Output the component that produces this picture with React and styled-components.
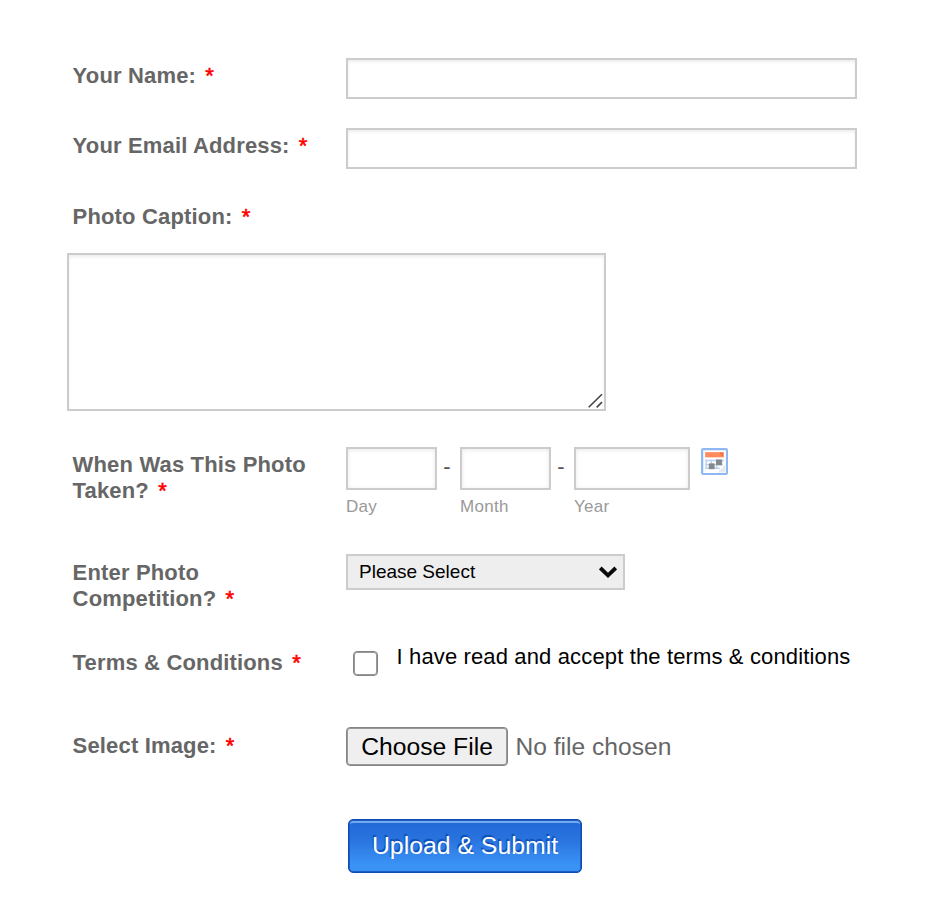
import React, { useState } from "react";
import styled, { createGlobalStyle } from "styled-components";

const App = () => {
  const [form, setForm] = useState({
    name: "",
    email: "",
    caption: "",
    day: "",
    month: "",
    year: "",
    terms: false,
  });

  const onChange = (e) => {
    const { name, type, checked, value } = e.target;
    setForm({ ...form, [name]: type === "checkbox" ? checked : value });
  };

  return (
    <>
      <GlobalStyle />
      <Form onSubmit={(e) => e.preventDefault()}>
        <Row $height={70}>
          <Label>
            Your Name: <Required>*</Required>
          </Label>
          <TextInput name="name" value={form.name} onChange={onChange} />
        </Row>

        <Row $height={71}>
          <Label>
            Your Email Address: <Required>*</Required>
          </Label>
          <TextInput name="email" value={form.email} onChange={onChange} />
        </Row>

        <Row $height={54}>
          <Label>
            Photo Caption: <Required>*</Required>
          </Label>
        </Row>

        <CaptionBox>
          <Caption name="caption" value={form.caption} onChange={onChange} />
          <Grip viewBox="0 0 15 15">
            <path d="M0.7 14.3L14 1.2M8.7 14.3L14 9.2" />
          </Grip>
        </CaptionBox>

        <Row $height={107}>
          <Label>
            When Was This Photo
            <br />
            Taken? <Required>*</Required>
          </Label>
          <DateGroup>
            <DatePart $width={91}>
              <DateInput name="day" value={form.day} onChange={onChange} />
              <SubLabel>Day</SubLabel>
            </DatePart>
            <Dash>-</Dash>
            <DatePart $width={91}>
              <DateInput name="month" value={form.month} onChange={onChange} />
              <SubLabel>Month</SubLabel>
            </DatePart>
            <Dash>-</Dash>
            <DatePart $width={116}>
              <DateInput name="year" value={form.year} onChange={onChange} />
              <SubLabel>Year</SubLabel>
            </DatePart>
            <CalendarIcon />
          </DateGroup>
        </Row>

        <Row $height={90}>
          <Label $top={6}>
            Enter Photo
            <br />
            Competition? <Required>*</Required>
          </Label>
          <Select type="button">
            Please Select
            <svg width="18" height="12" viewBox="0 0 18 12">
              <path d="M1.3 2L9 9.3L16.7 2" fill="none" stroke="#0a0a0a" strokeWidth="3.8" />
            </svg>
          </Select>
        </Row>

        <Row $height={83}>
          <Label $top={6}>
            Terms &amp; Conditions <Required>*</Required>
          </Label>
          <Terms>
            <Checkbox
              type="checkbox"
              name="terms"
              checked={form.terms}
              onChange={onChange}
            />
            <span>I have read and accept the terms &amp; conditions</span>
          </Terms>
        </Row>

        <Row $height={92}>
          <Label $top={6}>
            Select Image: <Required>*</Required>
          </Label>
          <FileField>
            <FileButton type="button">Choose File</FileButton>
            <FileName>No file chosen</FileName>
          </FileField>
        </Row>

        <Submit type="submit">Upload &amp; Submit</Submit>
      </Form>
    </>
  );
};

const CalendarIcon = () => (
  <Calendar viewBox="0 0 26 26">
    <rect x="1" y="1" width="24" height="24" rx="1" fill="#fff" stroke="#8fb8f0" strokeWidth="2" />
    <path d="M2.5 23.5V2.5H23.5" fill="none" stroke="#dfeafb" />
    <path d="M16 23.5L23.5 16V23.5Z" fill="#e3eaf3" />
    <path d="M5 11V20M10 11V20M15 11V20M20 11V17M4 12H22M4 16H21M4 19.5H18" stroke="#b9d0f3" strokeWidth="1.3" />
    <rect x="4" y="4" width="18" height="5" fill="#ff8a5c" />
    <path d="M19 4.5V6M21 4.5V5.5M20.5 6.5V8" stroke="#f0563a" strokeWidth="1.2" />
    <rect x="14.5" y="11" width="5.6" height="5.6" fill="#85898a" />
    <rect x="7.5" y="14.8" width="5.6" height="5.6" fill="#85898a" />
  </Calendar>
);

export default App;

const GlobalStyle = createGlobalStyle`
  * {
    box-sizing: border-box;
  }

  body {
    margin: 0;
    background: #fff;
    font-family: "Liberation Sans", Arial, sans-serif;
  }

  input, textarea, button {
    font-family: inherit;
    outline: none;
  }
`;

const Form = styled.form`
  display: flex;
  flex-direction: column;
  width: 930px;
  height: 904px;
  padding: 58px 0 0 72px;
`;

const Row = styled.div`
  display: flex;
  align-items: flex-start;
  flex: none;
  height: ${(props) => props.$height}px;
`;

const Label = styled.label`
  flex: none;
  width: 274px;
  padding: ${(props) => props.$top || 5}px 0 0 0.6px;
  color: #666;
  font-size: 22px;
  font-weight: bold;
  line-height: 26px;
  letter-spacing: 0.16px;
`;

const Required = styled.span`
  margin-left: 3px;
  color: #f00;
  font-weight: normal;
  -webkit-text-stroke: 0.6px #f00;
`;

const TextInput = styled.input`
  width: 511px;
  height: 41px;
  padding: 4px 8px;
  border: 2px solid #ccc;
  box-shadow: inset 0 2px 3px #eee;
  font-size: 20px;
`;

const CaptionBox = styled.div`
  display: grid;
  flex: none;
  width: 539px;
  height: 158px;
  margin: 0 0 36px -5px;
`;

const Caption = styled.textarea`
  grid-area: 1 / 1;
  padding: 6px 8px;
  border: 2px solid #ccc;
  box-shadow: inset 0 2px 3px #eee;
  resize: none;
  font-size: 20px;
`;

const Grip = styled.svg`
  grid-area: 1 / 1;
  place-self: end;
  width: 15px;
  height: 15px;
  margin: 0 3px 3px 0;
  fill: none;
  stroke: #444;
  stroke-width: 1.6;
  z-index: 1;
`;

const DateGroup = styled.div`
  display: flex;
  align-items: flex-start;
`;

const DatePart = styled.div`
  display: flex;
  flex-direction: column;
  width: ${(props) => props.$width}px;
`;

const DateInput = styled.input`
  width: 100%;
  height: 43px;
  padding: 4px 8px;
  border: 2px solid #ccc;
  box-shadow: inset 0 1px 4px #e8e8e8;
  font-size: 20px;
`;

const SubLabel = styled.span`
  margin-top: 7px;
  color: #999;
  font-size: 17px;
  line-height: 20px;
  letter-spacing: 0.3px;
`;

const Dash = styled.span`
  width: 23px;
  padding: 7px 3px 0 0;
  color: #555;
  font-size: 22px;
  line-height: 26px;
  text-align: center;
`;

const Calendar = styled.svg`
  width: 27px;
  height: 27px;
  margin: 1px 0 0 11px;
`;

const Select = styled.button`
  display: flex;
  align-items: center;
  justify-content: space-between;
  width: 279px;
  height: 36px;
  padding: 0 6px 0 11px;
  border: 2px solid #ccc;
  background: #eee;
  color: #000;
  font-size: 19px;
`;

const Terms = styled.label`
  display: flex;
  align-items: flex-start;
  color: #000;
  font-size: 22px;
  line-height: 26px;
  letter-spacing: 0.14px;
`;

const Checkbox = styled.input`
  flex: none;
  appearance: none;
  width: 25px;
  height: 25px;
  margin: 7px 18.5px 0 7px;
  border: 1px solid #858585;
  border-radius: 4px;
  background: #fff;
  box-shadow: inset 0 0 0 1px #999;

  &:checked {
    background: #0075ff;
  }
`;

const FileField = styled.div`
  display: flex;
  align-items: center;
`;

const FileButton = styled.button`
  width: 162px;
  height: 39px;
  padding: 0;
  border: 1px solid #858585;
  border-radius: 4px;
  background: #efefef;
  box-shadow: inset 0 0 0 1px #999;
  color: #000;
  font-size: 24.7px;
`;

const FileName = styled.span`
  margin-left: 7.5px;
  color: #666;
  font-size: 24.6px;
`;

const Submit = styled.button`
  flex: none;
  width: 234px;
  height: 54px;
  margin-left: 276px;
  padding: 0 0 1px;
  border: 1px solid #0d4cb3;
  border-radius: 5px;
  background: linear-gradient(#2168d6 0%, #2872de 35%, #3a92f5 85%, #3a92f5 100%);
  box-shadow: inset 0 0 0 1px #1c5cc4, inset 0 3px 0 #74a9ee;
  color: #fff;
  font-size: 24.8px;
  text-shadow: -1px -2px 1px #0d4aad;
`;
